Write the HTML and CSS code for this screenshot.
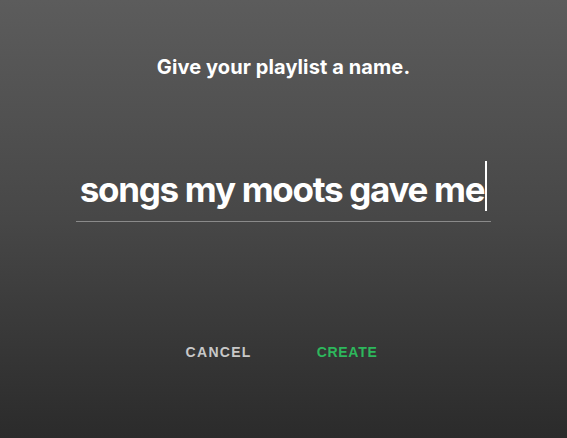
FILE: index.html
```html
<!DOCTYPE html>
<html>
<head>
<meta charset="utf-8">
<link rel="stylesheet" href="styles.css">
</head>
<body>
<div class="screen">
  <h1 class="title">Give your playlist a name.</h1>
  <div class="field">
    <div class="value"><span class="text">songs my moots gave me</span><span class="caret"></span></div>
  </div>
  <div class="actions">
    <button class="btn cancel">CANCEL</button>
    <button class="btn create">CREATE</button>
  </div>
</div>
</body>
</html>
```
FILE: styles.css
```css
html, body {
  margin: 0;
  padding: 0;
}
body {
  width: 567px;
  height: 438px;
  overflow: hidden;
  background: linear-gradient(to bottom, #5c5c5c 0%, #474747 50%, #2b2b2b 100%);
  font-family: "Inter", "Liberation Sans", sans-serif;
}
.screen {
  display: flex;
  flex-direction: column;
  align-items: center;
  height: 438px;
}
.title {
  margin: 55px 0 0;
  font-size: 20px;
  font-weight: 700;
  color: #ffffff;
  letter-spacing: 0.1px;
  line-height: 24px;
}
.field {
  margin-top: 82px;
  width: 415px;
  border-bottom: 1px solid #8a8a8a;
  display: flex;
  justify-content: center;
  padding-bottom: 10px;
}
.value {
  display: flex;
  align-items: flex-end;
}
.text {
  font-size: 35px;
  font-weight: 700;
  color: #ffffff;
  letter-spacing: -1.3px;
  line-height: 44px;
}
.caret {
  width: 2px;
  height: 50px;
  background: #ffffff;
  margin-left: 1px;
  margin-bottom: 0;
}
.actions {
  margin-top: 121px;
  display: flex;
  gap: 65px;
  margin-right: 4px;
}
.btn {
  background: none;
  border: none;
  padding: 0;
  font-family: "Liberation Sans", sans-serif;
  font-size: 14px;
  font-weight: 700;
  letter-spacing: 1.3px;
  line-height: 18px;
}
.cancel { color: #c8c8c8; }
.create { color: #2db85c; letter-spacing: 0.7px; }
```
